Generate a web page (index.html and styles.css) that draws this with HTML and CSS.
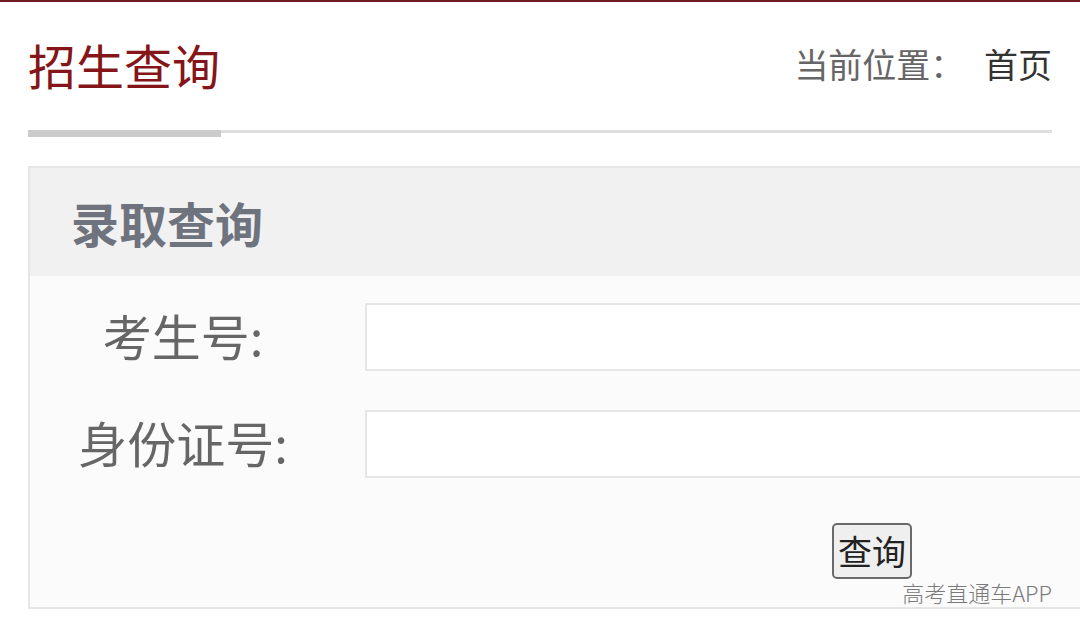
FILE: index.html
```html
<!DOCTYPE html>
<html lang="zh-CN">
<head>
    <meta charset="UTF-8">
    <meta name="viewport" content="width=device-width, initial-scale=1.0">
    <title>招生查询</title>
    <link rel="stylesheet" href="styles.css">
</head>
<body>

<div class="top-line"></div>

<div class="page">
    <div class="page-head">
        <h1 class="page-title">招生查询</h1>
        <div class="crumbs">
            <span class="crumbs-label">当前位置：</span>
            <a class="crumbs-link" href="#">首页</a>
        </div>
    </div>

    <div class="head-rule"><div class="head-rule-bar"></div></div>

    <div class="query-box">
        <h2 class="query-title">录取查询</h2>
        <form class="query-form" onsubmit="return false">
            <div class="form-row">
                <label class="form-label" for="examNo">考生号:</label>
                <input class="form-input" type="text" id="examNo" name="examNo">
            </div>
            <div class="form-row">
                <label class="form-label" for="idNo">身份证号:</label>
                <input class="form-input" type="text" id="idNo" name="idNo">
            </div>
            <div class="form-row form-actions">
                <button class="query-button" type="submit">查询</button>
            </div>
        </form>
    </div>
</div>

<div class="watermark">高考直通车APP</div>

</body>
</html>
```

FILE: styles.css
```css
body {
    margin: 0;
    padding: 0;
    background: #fff;
    font-family: "Noto Sans CJK SC", "Noto Sans", sans-serif;
    overflow: hidden;
    height: 635px;
    position: relative;
}

.top-line {
    height: 2px;
    background-color: #6e1a22;
}

.page {
    width: 1024px;
    padding: 0 28px;
}

.page-head {
    display: flex;
    justify-content: space-between;
    align-items: center;
    height: 128px;
}

.page-title {
    margin: 0;
    font-size: 48px;
    font-weight: normal;
    color: #841519;
    line-height: 1;
    padding-bottom: 4px;
}

.crumbs {
    font-size: 34px;
    line-height: 1;
    padding-bottom: 4px;
}

.crumbs-label {
    color: #666;
}

.crumbs-link {
    color: #333;
    text-decoration: none;
    margin-left: 12px;
}

.head-rule {
    height: 3px;
    background-color: #dedede;
}

.head-rule-bar {
    width: 193px;
    height: 7px;
    background-color: #cbcbcb;
}

.query-box {
    margin-top: 33px;
    width: 1409px;
    border: 2px solid #e6e6e6;
    background-color: #fbfbfb;
}

.query-title {
    margin: 0;
    height: 108px;
    padding-left: 41px;
    display: flex;
    align-items: center;
    font-size: 48px;
    font-weight: bold;
    color: #6e737e;
    background-color: #f1f1f1;
}

.query-form {
    padding: 27px 30px 28px 0;
    display: flex;
    flex-direction: column;
    gap: 39px;
}

.form-row {
    display: flex;
    align-items: center;
    gap: 29px;
}

.form-label {
    width: 306px;
    text-align: center;
    font-size: 49px;
    color: #666;
    line-height: 1;
    padding-bottom: 6px;
}

.form-input {
    flex: 1;
    height: 68px;
    box-sizing: border-box;
    border: 2px solid #e6e6e6;
    background-color: #fff;
    border-radius: 0;
    outline: none;
    font-size: 30px;
}

.form-actions {
    padding-left: 305px;
    justify-content: center;
    margin-top: 6px;
}

.query-button {
    width: 80px;
    height: 56px;
    padding: 0;
    font-family: inherit;
    font-size: 34px;
    line-height: 1;
    color: #222;
    background-color: #efefef;
    border: 2px solid #6a6a6a;
    border-radius: 5px;
    cursor: pointer;
}

/* app badge in the bottom-right corner, drawn over the form */
.watermark {
    position: absolute;
    right: 28px;
    bottom: 30px;
    font-size: 22px;
    font-weight: 300;
    line-height: 1.2;
    color: #7a7a7a;
}
```
